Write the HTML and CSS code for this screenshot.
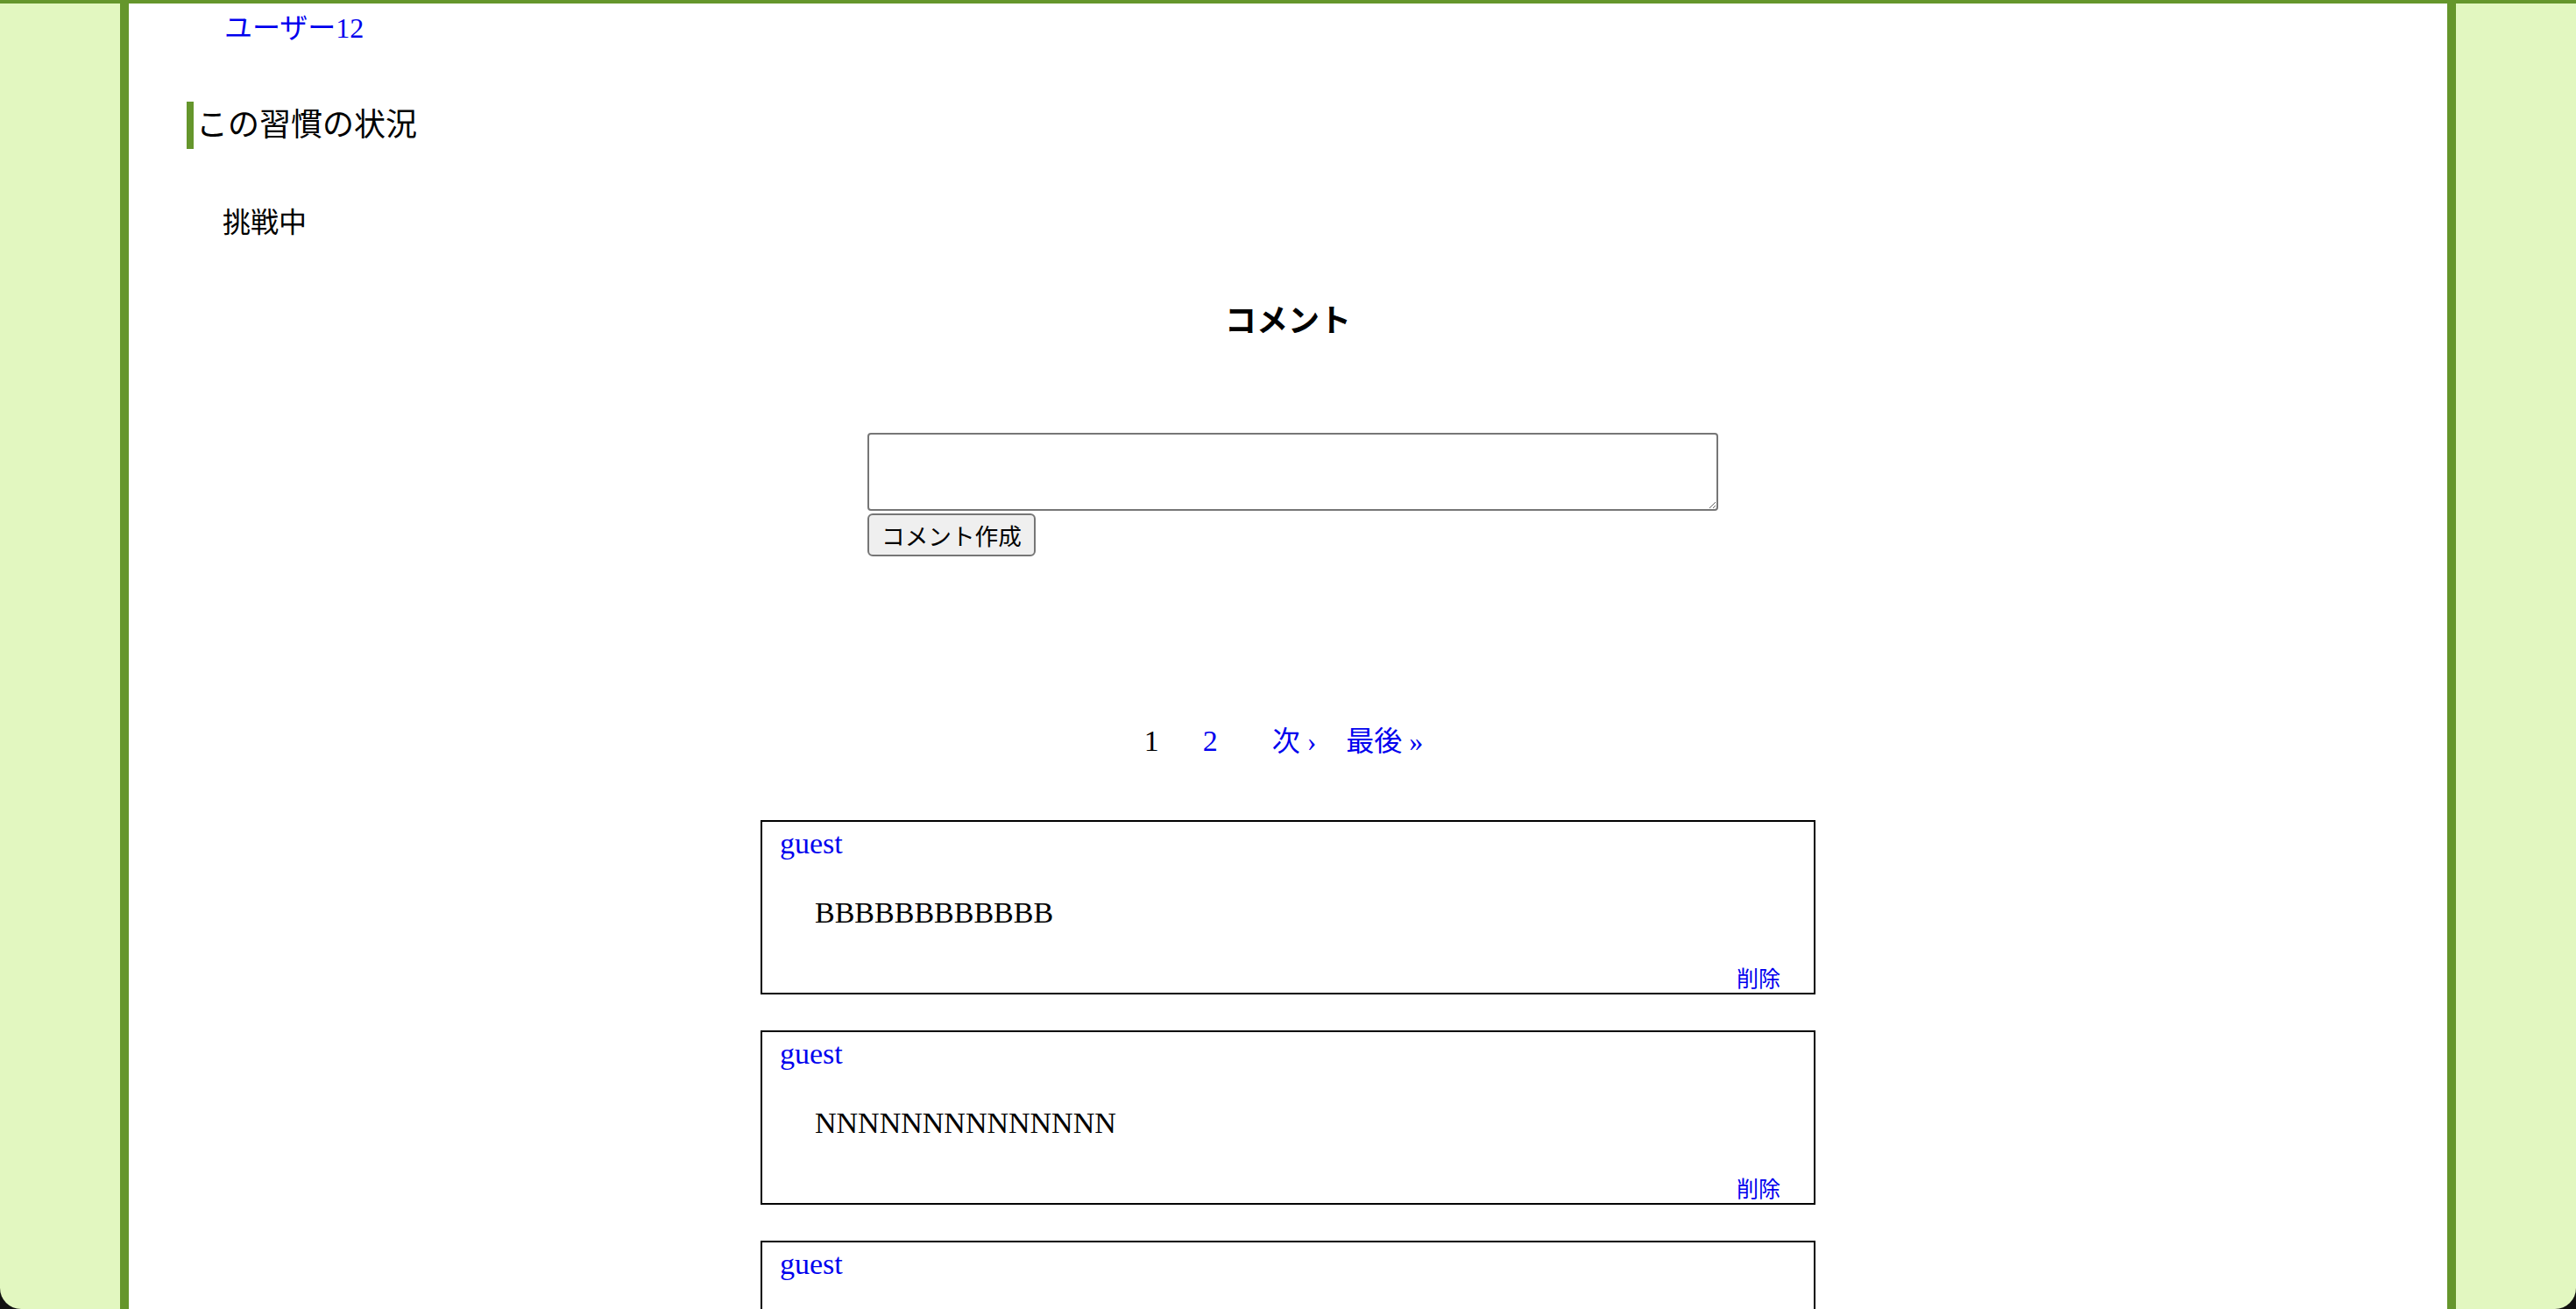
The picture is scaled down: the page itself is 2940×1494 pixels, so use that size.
FILE: index.html
```html
<!DOCTYPE html>
<html lang="ja">
<head>
<meta charset="utf-8">
<title>習慣</title>
<link rel="stylesheet" href="styles.css">
</head>
<body>
<div class="window">
  <div class="main">
    <p class="user"><a href="#">ユーザー12</a></p>
    <h3 class="section-title">この習慣の状況</h3>
    <p class="status">挑戦中</p>
    <h3 class="comment-title">コメント</h3>
    <form class="comment-form">
      <textarea class="comment-input"></textarea>
      <button type="button" class="comment-submit">コメント作成</button>
    </form>
    <nav class="pagination">
      <span class="page current">1</span>
      <span class="page page-2"><a href="#">2</a></span>
      <span class="next"><a href="#">次 ›</a></span>
      <span class="last"><a href="#">最後 »</a></span>
    </nav>
    <div class="comments">
      <div class="comment">
        <a href="#" class="comment-user">guest</a>
        <p class="comment-body">BBBBBBBBBBBB</p>
        <div class="comment-actions"><a href="#" class="delete">削除</a></div>
      </div>
      <div class="comment">
        <a href="#" class="comment-user">guest</a>
        <p class="comment-body">NNNNNNNNNNNNNN</p>
        <div class="comment-actions"><a href="#" class="delete">削除</a></div>
      </div>
      <div class="comment">
        <a href="#" class="comment-user">guest</a>
      </div>
    </div>
  </div>
</div>
</body>
</html>
```
FILE: styles.css
```css
html {
  background: #111;
}
body {
  margin: 0;
  font-family: "Liberation Serif", "Noto Sans CJK JP", serif;
  font-size: 32px;
  line-height: 40px;
  color: #000;
}
a {
  color: #0000ee;
  text-decoration: none;
}
.window {
  height: 100vh;
  overflow: hidden;
  background: #e2f7c0;
  border-top: 4px solid #65962c;
  box-sizing: border-box;
  border-radius: 0 0 24px 24px;
  padding: 0 137px;
}
.main {
  background: #fff;
  border-left: 10px solid #65962c;
  border-right: 10px solid #65962c;
  min-height: 100%;
  display: flex;
  flex-direction: column;
}
.user {
  margin: 8px 0 0 109px;
}
.section-title {
  margin: 64px 0 0 66px;
  font-size: 36px;
  line-height: 54px;
  font-weight: normal;
  border-left: 8px solid #65962c;
  padding-left: 3px;
}
.status {
  margin: 64px 0 0 107px;
}
.comment-title {
  margin: 66px 0 0;
  font-size: 36px;
  line-height: 54px;
  font-weight: bold;
  text-align: center;
}
.comment-form {
  margin: 100px auto 0;
  width: 960px;
  display: flex;
  flex-direction: column;
  align-items: flex-start;
  gap: 3px;
}
.comment-input {
  width: 971px;
  height: 89px;
  box-sizing: border-box;
  border: 2px solid #767676;
  border-radius: 4px;
  margin: 0;
  flex-shrink: 0;
}
.comment-submit {
  font-family: "Noto Sans CJK JP", sans-serif;
  font-size: 26.67px;
  line-height: 41px;
  height: 49px;
  padding: 0 14px;
  border: 2px solid #767676;
  border-radius: 6px;
  background: #efefef;
  color: #000;
  margin: 0;
}
.pagination {
  margin-top: 191px;
  display: flex;
  justify-content: center;
  padding-right: 10px;
}
.page {
  font-size: 34px;
}
.page-2 {
  margin-left: 50px;
}
.next {
  margin-left: 62px;
}
.last {
  margin-left: 34px;
}
.comments {
  margin: 70px auto 0;
  width: 1204px;
  display: flex;
  flex-direction: column;
  gap: 41px;
}
.comment {
  border: 2px solid #000;
  height: 199px;
  box-sizing: border-box;
  padding: 5px 20px 0;
  display: flex;
  flex-direction: column;
  align-items: flex-start;
  flex-shrink: 0;
}
.comment-user {
  font-size: 34px;
}
.comment-body {
  margin: 39px 0 0 40px;
  font-size: 34px;
}
.comment-actions {
  align-self: stretch;
  text-align: right;
  margin-top: 40px;
  padding-right: 18px;
  font-size: 25px;
  line-height: 32px;
}
```
